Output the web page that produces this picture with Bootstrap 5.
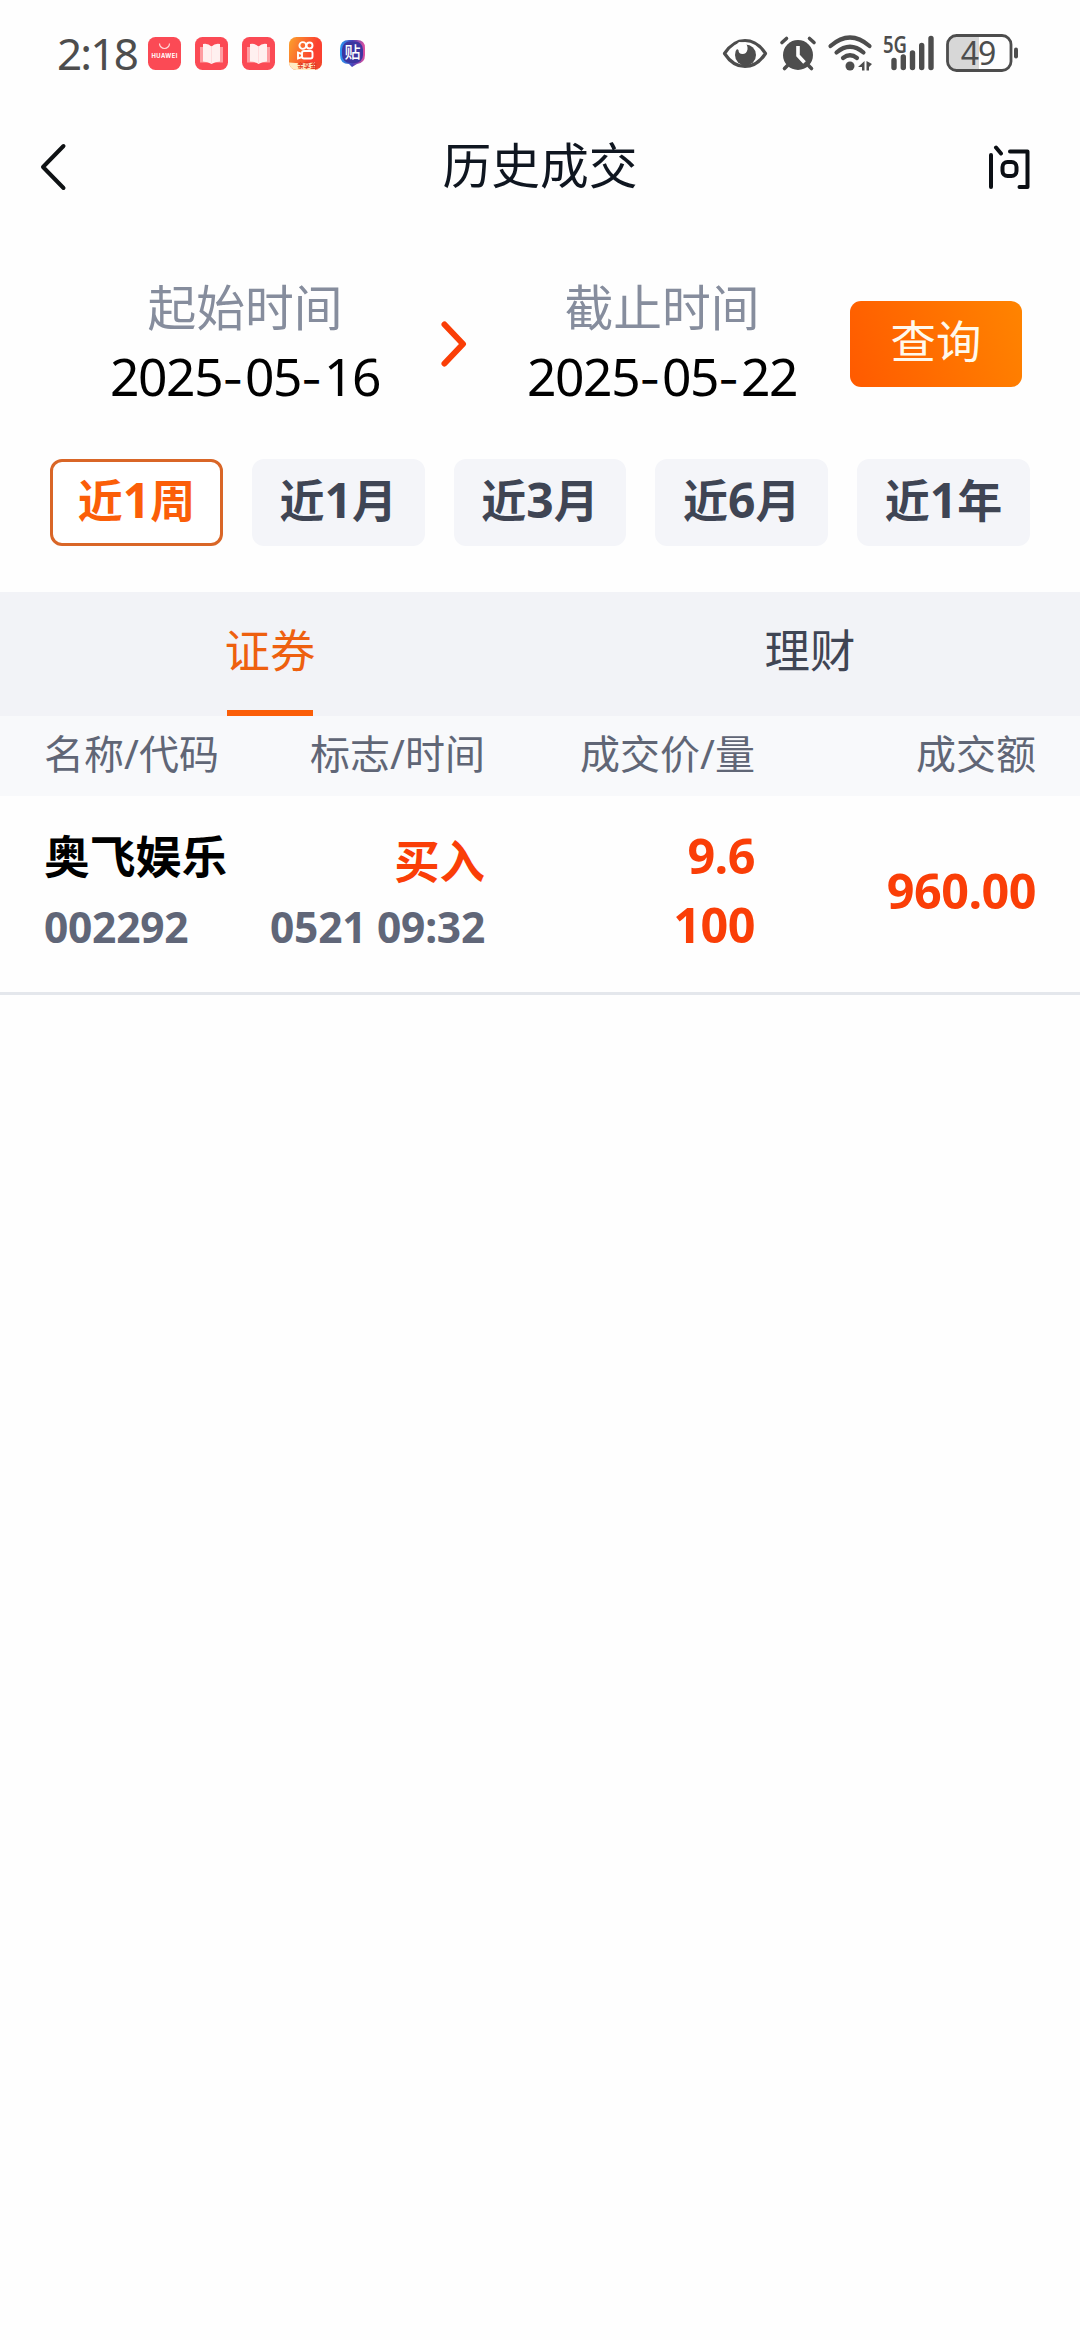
<!DOCTYPE html>
<html lang="zh-CN">
<head>
<meta charset="utf-8">
<meta name="viewport" content="width=device-width, initial-scale=1">
<title>历史成交</title>
<link href="https://cdn.jsdelivr.net/npm/bootstrap@5.3.0/dist/css/bootstrap.min.css" rel="stylesheet">
<style>
  body { font-family: "Noto Sans", "Noto Sans CJK SC", sans-serif; background: #fefefe; color: #000; min-height: 2340px; overflow-x: hidden; }
  svg { display: block; flex: none; overflow: visible; }
  .status-bar { height: 106px; padding: 0 62px 0 57px; color: #4d4d4d; }
  .clock { font-size: 44px; line-height: 44px; letter-spacing: -1.8px; width: 91px; white-space: nowrap; }
  .apps { gap: 14px; }
  .ic-alarm { margin: 0 12px; }
  .ic-signal { margin-left: 11px; }
  .ic-battery { margin-left: 11px; }
  .title-bar { height: 122px; padding: 0 41px; }
  .title-bar > * { flex: 1 1 0; }
  .title-bar h1 { font-size: 48.8px; line-height: 60px; padding-bottom: 4px; color: #0f1620; }
  .ask svg { margin-right: 9px; }
  .range { height: 231px; padding: 49px 58px 0 0; }
  .date-col { width: 310px; }
  .date-label { font-size: 48.8px; line-height: 60px; color: #868d9d; }
  .date-value { font-size: 51.5px; line-height: 79px; letter-spacing: -1.4px; }
  .date-value i { font: 46px/1 Inter, sans-serif; letter-spacing: 0; padding-right: 1.6px; }
  .range-arrow { margin: 44px 40px 0; }
  .query { width: 172px; height: 86px; margin-top: 24px; border: 0; border-radius: 11px; font-size: 45.4px; line-height: 60px; padding: 0 0 7px; color: #fff9ec; background: linear-gradient(70deg, #ff5a00, #ff8400); }
  .chips { gap: 29px; padding: 0 50px; height: 133px; }
  .chip { flex: 1 1 0; height: 87px; border: 3px solid #f4f5f9; border-radius: 12px; background: #f4f5f9; color: #3f4554; font-size: 45px; font-weight: 700; line-height: 60px; padding: 0 0 4px; }
  .chip b { font-size: 48px; line-height: 1; font-weight: 700; }
  .chip.on { background: #fff; border-color: #d96627; color: #fb5e08; }
  .tabs-row { height: 124px; background: #f2f3f7; font-size: 45.4px; color: #3f4554; }
  .tab-item { line-height: 116px; height: 124px; }
  .tab-item.on { color: #ee600f; }
  .tab-item.on::after { content: ""; position: absolute; left: 50%; bottom: 0; width: 86px; height: 6px; margin-left: -43px; background: #fb5e08; }
  .cells { padding: 0 44px; }
  .c1 { width: 190px; } .c2 { width: 251px; } .c3 { width: 270px; } .c4 { width: 281px; }
  .cells > div { white-space: nowrap; flex: none; }
  .cells-head { height: 80px; background: #f8f9fb; color: #606676; font-size: 40px; line-height: 75px; }
  .deal { height: 199px; border-bottom: 3px solid #e4e7ec; font-weight: 700; padding-top: 25px; }
  .stock { font-size: 45.8px; line-height: 70px; }
  .sub { font-size: 42.5px; line-height: 72px; letter-spacing: -.25px; color: #606678; }
  .up { color: #fa3e07; font-size: 48.5px; line-height: 69px; letter-spacing: -.5px; }
  .side { font-size: 45.4px; line-height: 81px; letter-spacing: 0; }
  .side + .sub { line-height: 49px; }
  .amount { padding-top: 35px; }
</style>
</head>
<body>
<header>
  <div class="status-bar d-flex align-items-center justify-content-between">
    <div class="d-flex align-items-center">
      <div class="clock">2:18</div>
      <div class="apps d-flex align-items-center">
        <svg width="33" height="33" viewBox="0 0 33 33"><rect width="33" height="33" rx="7.5" fill="#fb4a55"/><path d="M11.500 6.500a5 5 0 0 0 10 0" fill="none" stroke="#ffd9d9" stroke-width="1.200"/><text x="16.500" y="21" font-family="Inter, sans-serif" font-size="5.800" font-weight="700" fill="#fff" text-anchor="middle" textLength="26">HUAWEI</text></svg>
        <svg width="33" height="33" viewBox="0 0 33 33"><rect width="33" height="33" rx="7.500" fill="#fb4a55"/><path d="M5 10h23v15.500H5z" fill="#ff9ca1"/><path d="M8 7q5-1 8.500 2.500Q20 6 25 7v17.500q-5 0-8.500 2.500-3.500-2.500-8.500-2.500z" fill="#fff0f0"/><path d="M16.500 9.500v17" stroke="#ffdcdd" stroke-width="1"/></svg>
        <svg width="33" height="33" viewBox="0 0 33 33"><rect width="33" height="33" rx="7.500" fill="#fb4a55"/><path d="M5 10h23v15.500H5z" fill="#ff9ca1"/><path d="M8 7q5-1 8.500 2.500Q20 6 25 7v17.500q-5 0-8.500 2.500-3.500-2.500-8.500-2.500z" fill="#fff0f0"/><path d="M16.500 9.500v17" stroke="#ffdcdd" stroke-width="1"/></svg>
        <svg width="33" height="33" viewBox="0 0 33 33"><defs><linearGradient id="ks" x2="1" y2=".4"><stop stop-color="#fba32c"/><stop offset=".8" stop-color="#fb4030"/></linearGradient><clipPath id="kc"><rect width="33" height="33" rx="7.500"/></clipPath></defs><g clip-path="url(#kc)"><rect width="33" height="33" fill="url(#ks)"/><path d="M0 25.500q16 2 33-1V33H0z" fill="#ffedc4"/><path d="M26 25l7-2v7l-7 3z" fill="#f2452c"/></g><g fill="none" stroke="#fff" stroke-width="1.900"><circle cx="13.800" cy="8.500" r="3.400"/><circle cx="20.500" cy="8.500" r="3"/><rect x="13" y="14" width="10.500" height="7.500" rx="2"/><path d="M13 17l-4-1.500v6l4-1.500"/></g><text x="18" y="31.300" font-size="6.500" font-weight="700" fill="#e33a1b" text-anchor="middle">亲享金</text></svg>
        <svg width="33" height="33" viewBox="0 0 33 33"><defs><linearGradient id="tb" x2="1"><stop stop-color="#2a9bf5"/><stop offset=".5" stop-color="#4a43b8"/><stop offset="1" stop-color="#e0509e"/></linearGradient></defs><path d="M13 3h8q8 0 8 8v7q0 8-8 9l-5 3-3-3q-9 0-9-9v-6q0-9 9-9z" fill="url(#tb)"/><rect x="6" y="4.500" width="21" height="21.500" rx="8" fill="#3c35a0"/><text x="16.500" y="21" font-size="16" font-weight="500" fill="#fff" text-anchor="middle">贴</text></svg>
      </div>
    </div>
    <div class="d-flex align-items-center">
      <svg width="46" height="36" viewBox="0 0 46 36"><path d="M2.500 18.500Q11 5.500 23 5.500t20.500 13Q35 31.500 23 31.500t-20.500-13z" fill="none" stroke="#4d4d4d" stroke-width="3.200" stroke-linejoin="round"/><circle cx="23.500" cy="20" r="10.500" fill="#4d4d4d"/><path d="M12 12l5-5 6 .5q3 3 2.500 7-1 4.500-5 4.500-4 0-4-4z" fill="#fefefe"/></svg>
      <svg class="ic-alarm" width="36" height="36" viewBox="0 0 36 36"><circle cx="18" cy="20" r="15" fill="#4d4d4d"/><path d="M2 7.500l4.500-4M34 7.500l-4.500-4M7.500 30.500l-3 3M28.500 30.500l3 3" stroke="#4d4d4d" stroke-width="3.600" stroke-linecap="round"/><path d="M18 11v9.500l6.500 7" fill="none" stroke="#fefefe" stroke-width="3.600"/></svg>
      <svg width="44" height="36" viewBox="0 0 44 36"><g fill="none" stroke="#4d4d4d" stroke-width="4.200" stroke-linecap="round"><path d="M2.500 11Q22-6 41.500 11M8.500 17.500q13.500-11.500 27 0M15 23q7-5.500 14 0"/></g><circle cx="22" cy="31" r="4.500" fill="#4d4d4d"/><path d="M36.500 26v9.500h-2.500V32h-4zM38.500 26v9.500h2.500V32l3-3z" fill="#4d4d4d"/></svg>
      <svg class="ic-signal" width="52" height="36" viewBox="0 0 52 36"><text x="0" y="18" font-size="22.500" font-weight="600" fill="#4d4d4d" textLength="24" lengthAdjust="spacingAndGlyphs">5G</text><path d="M11 25.500v7M20.300 22v10.500M29.500 18v14.500M38.700 10.500v22M48 3.500v29" stroke="#4d4d4d" stroke-width="5.400" stroke-linecap="round"/></svg>
      <svg class="ic-battery" width="72" height="38" viewBox="0 0 72 38"><path d="M33 2v34H10q-8 0-8-8V10q0-8 8-8z" fill="#d7d7d7"/><rect x="1.500" y="1.500" width="63.500" height="35" rx="9" fill="none" stroke="#4d4d4d" stroke-width="2.800"/><path d="M70 15.500v7" stroke="#4d4d4d" stroke-width="4" stroke-linecap="round"/><text x="32" y="30.500" font-size="32" fill="#4d4d4d" text-anchor="middle" letter-spacing="-1">49</text></svg>
    </div>
  </div>
  <nav class="title-bar d-flex align-items-center justify-content-between">
    <div><svg width="24" height="46" viewBox="0 0 24 46"><path d="M22.500 2L2 23l20.500 21" fill="none" stroke="#0f1214" stroke-width="4" stroke-linecap="round" stroke-linejoin="round"/></svg></div>
    <h1 class="m-0 fw-normal text-center">历史成交</h1>
    <div class="ask d-flex justify-content-end"><svg width="42" height="46" viewBox="0 0 42 46"><path d="M3 11v32M8 3.500l5 6M22 7.500h17.500v35.500h-8" fill="none" stroke="#0b0f14" stroke-width="4" stroke-linecap="round" stroke-linejoin="round"/><rect x="14.500" y="18" width="14" height="14" rx="5" fill="none" stroke="#0b0f14" stroke-width="4"/></svg></div>
  </nav>
</header>
<main>
  <section class="range d-flex align-items-start justify-content-between">
    <div class="d-flex" style="padding-left:90px">
      <div class="date-col text-center"><div class="date-label">起始时间</div><div class="date-value">2025<i>-</i>05<i>-</i>16</div></div>
      <svg class="range-arrow" width="27" height="47" viewBox="0 0 27 47"><path d="M4.500 3.500l18.500 19.500-18.500 19.500" fill="none" stroke="#fa3e07" stroke-width="6" stroke-linecap="round" stroke-linejoin="round"/></svg>
      <div class="date-col text-center"><div class="date-label">截止时间</div><div class="date-value">2025<i>-</i>05<i>-</i>22</div></div>
    </div>
    <button class="btn query">查询</button>
  </section>
  <section class="chips d-flex align-items-start">
    <button class="btn chip on">近<b>1</b>周</button>
    <button class="btn chip">近<b>1</b>月</button>
    <button class="btn chip">近<b>3</b>月</button>
    <button class="btn chip">近<b>6</b>月</button>
    <button class="btn chip">近<b>1</b>年</button>
  </section>
  <div class="tabs-row d-flex text-center">
    <div class="tab-item on w-50 position-relative">证券</div>
    <div class="tab-item w-50">理财</div>
  </div>
  <div class="cells cells-head d-flex">
    <div class="c1">名称/代码</div><div class="c2 text-end">标志/时间</div><div class="c3 text-end">成交价/量</div><div class="c4 text-end">成交额</div>
  </div>
  <div class="cells deal d-flex">
    <div class="c1"><div class="stock">奥飞娱乐</div><div class="sub">002292</div></div>
    <div class="c2 text-end"><div class="up side">买入</div><div class="sub">0521 09:32</div></div>
    <div class="c3 text-end up"><div>9.6</div><div>100</div></div>
    <div class="c4 text-end up amount">960.00</div>
  </div>
</main>
<script src="https://cdn.jsdelivr.net/npm/bootstrap@5.3.0/dist/js/bootstrap.bundle.min.js"></script>
</body>
</html>
